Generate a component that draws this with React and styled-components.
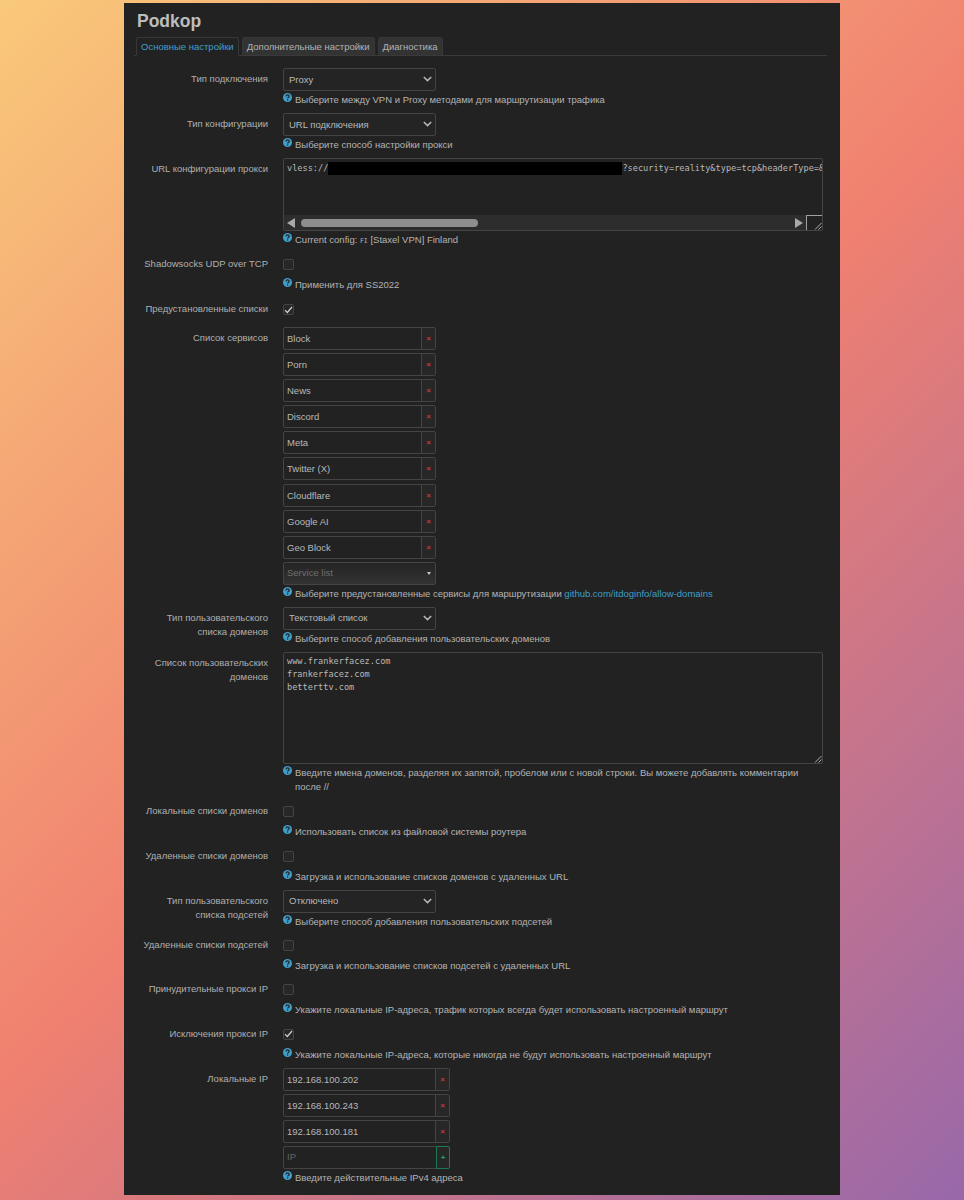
import React from 'react';
import styled, { createGlobalStyle } from 'styled-components';

const GlobalStyle = createGlobalStyle`
	html, body {
		margin: 0;
		padding: 0;
	}
	body {
		width: 964px;
		height: 1200px;
		overflow: hidden;
		background: linear-gradient(135deg, #f9c97a 0%, #f08070 50%, #9868aa 100%);
		font-family: "Liberation Sans", Arial, sans-serif;
		font-size: 9.5px;
		color: #b4b4b4;
	}
`;

const Page = styled.div`
	padding: 3px 0 0 124px;
`;

const Panel = styled.main`
	width: 716px;
	height: 1192px;
	box-sizing: border-box;
	padding: 8px 13px 0 13px;
	background: #222;
`;

const Title = styled.h1`
	margin: 0;
	font-size: 17.5px;
	line-height: 20px;
	font-weight: 700;
	color: #bdbdbd;
`;

const Tabs = styled.ul`
	display: flex;
	gap: 3px;
	margin: 6px 0 12px -3px;
	padding: 0 0 0 2px;
	list-style: none;
	border-bottom: 1px solid #3a3a3a;
	height: 18px;
`;

const Tab = styled.li`
	box-sizing: border-box;
	padding: 0 4px;
	line-height: 17px;
	border: 1px solid #383838;
	border-bottom: ${ ( p ) => ( p.$active ? '1px solid #222' : '0' ) };
	border-radius: 3px 3px 0 0;
	background: ${ ( p ) => ( p.$active ? '#222' : '#333' ) };
	color: ${ ( p ) => ( p.$active ? '#3f9fc9' : '#b4b4b4' ) };
	height: ${ ( p ) => ( p.$active ? '19px' : '18px' ) };
`;

const Row = styled.div`
	display: grid;
	grid-template-columns: 131px 1fr;
	column-gap: 15px;
	margin-bottom: ${ ( p ) => p.$gap ?? 6 }px;
`;

const Label = styled.div`
	text-align: right;
	line-height: 14px;
	padding-top: 4px;
	color: #b0b0b0;
`;

const Field = styled.div`
	min-width: 0;
`;

const Help = styled.div`
	display: flex;
	gap: 3px;
	padding: 2px 25px 0 0;
	line-height: 14px;
	color: #b4b4b4;
`;

const HelpBadge = styled.svg`
	flex: none;
	width: 9px;
	height: 9px;
`;

const HelpLink = styled.a`
	color: #3f9fc9;
	text-decoration: none;
`;

const TinyFlag = styled.span`
	font-size: 6.5px;
	font-family: "DejaVu Sans Mono", monospace;
`;

const Select = styled.div`
	display: flex;
	align-items: center;
	justify-content: space-between;
	width: 153px;
	height: 23px;
	box-sizing: border-box;
	padding: 0 3px 1px 5px;
	border: 1px solid #444;
	border-radius: 2px;
	background: #242424;
	color: #b8b8b8;
`;

const ComboBox = styled(Select)`
	padding: 0 4px 2px 3px;
	background: linear-gradient(#242424, #333);
	color: #6f6f6f;
`;

const ComboArrow = styled.span`
	width: 0;
	height: 0;
	margin-top: 2px;
	border: 2px solid transparent;
	border-top: 3px solid #c4c4c4;
	border-bottom: 0;
`;

const CheckSlot = styled.div`
	display: flex;
	align-items: center;
	height: 23px;
`;

const Check = styled.span`
	display: flex;
	align-items: center;
	justify-content: center;
	width: 11px;
	height: 11px;
	box-sizing: border-box;
	border: 1px solid #444;
	border-radius: 2px;
	background: #272727;
	color: #d0d0d0;
`;

const Mono = styled.div`
	font-family: "DejaVu Sans Mono", monospace;
	font-size: 8.6px;
	color: #b8b8b8;
`;

const ConfigBox = styled.div`
	width: 540px;
	height: 73px;
	box-sizing: border-box;
	display: flex;
	flex-direction: column;
	border: 1px solid #444;
	border-radius: 2px;
	overflow: hidden;
`;

const ConfigText = styled(Mono)`
	flex: 1;
	padding: 3px 0 0 3px;
	line-height: 13px;
	white-space: nowrap;
	overflow: hidden;
`;

const Redacted = styled.span`
	display: inline-block;
	width: 294px;
	height: 13px;
	vertical-align: top;
	background: #000;
`;

const ScrollBar = styled.div`
	display: flex;
	align-items: center;
	height: 15px;
	background: #2d2d2d;
`;

const ScrollArrow = styled.span`
	flex: none;
	width: 0;
	height: 0;
	margin: ${ ( p ) => ( p.$right ? '0 3px 0 0' : '0 6px 0 3px' ) };
	border-top: 5px solid transparent;
	border-bottom: 5px solid transparent;
	${ ( p ) => ( p.$right ? 'border-left: 8px solid #a8a8a8;' : 'border-right: 8px solid #a8a8a8;' ) }
`;

const ScrollThumb = styled.span`
	flex: none;
	width: 177px;
	height: 8px;
	border-radius: 4px;
	background: #8e8e8e;
`;

const ScrollFill = styled.span`
	flex: 1;
`;

const Resizer = styled.span`
	position: relative;
	flex: none;
	width: 16px;
	height: 15px;
	box-sizing: border-box;
	border-left: 1px solid #a0a0a0;
	border-top: 1px solid #a0a0a0;
	background: #222;
`;

const Grip = styled.svg`
	position: absolute;
	right: 0;
	bottom: 0;
	width: 8px;
	height: 8px;
`;

const DomainBox = styled(Mono)`
	position: relative;
	width: 540px;
	height: 112px;
	box-sizing: border-box;
	padding: 2px 3px;
	line-height: 13px;
	border: 1px solid #444;
	border-radius: 2px;
	white-space: pre;
`;

const DynList = styled.div`
	display: flex;
	flex-direction: column;
	gap: ${ ( p ) => p.$gap }px;
	width: ${ ( p ) => p.$width }px;
`;

const DynItem = styled.div`
	display: flex;
	height: 23px;
	box-sizing: border-box;
	border: 1px solid #444;
	border-radius: 2px;
`;

const DynText = styled.span`
	flex: 1;
	padding-left: 3px;
	line-height: ${ ( p ) => ( p.$placeholder ? '20px' : '22px' ) };
	color: ${ ( p ) => ( p.$placeholder ? '#666' : '#b8b8b8' ) };
`;

const DynButton = styled.span`
	display: flex;
	flex: none;
	align-items: center;
	justify-content: center;
	box-sizing: border-box;
	width: 14px;
	margin: ${ ( p ) => ( p.$add ? '-1px -1px -1px 0' : '0' ) };
	border: ${ ( p ) => ( p.$add ? '1px solid #1d7a52' : '0' ) };
	border-left: 1px solid ${ ( p ) => ( p.$add ? '#1d7a52' : '#444' ) };
	border-radius: ${ ( p ) => ( p.$add ? '0 2px 2px 0' : '0' ) };
	background: #272727;
	font-size: 8px;
	font-weight: 700;
	color: ${ ( p ) => ( p.$add ? '#21a366' : '#c23a3a' ) };
`;

const HelpIcon = () => (
	<HelpBadge viewBox="0 0 18 18" aria-hidden="true">
		<circle cx="9" cy="9" r="9" fill="#3f9fc9" />
		<path d="M6 7c0-4.200 6.400-4.200 6.400-.4 0 2.400-3.200 2.400-3.200 4.600" fill="none" stroke="#222" strokeWidth="2.400" />
		<circle cx="9.200" cy="14.200" r="1.500" fill="#222" />
	</HelpBadge>
);

const Chevron = () => (
	<svg width="9" height="6" viewBox="0 0 9 6" aria-hidden="true">
		<path d="M.8 1l3.700 3.600L8.200 1" fill="none" stroke="#b8b8b8" strokeWidth="1.500" />
	</svg>
);

const CheckMark = () => (
	<svg width="9" height="8" viewBox="0 0 9 8" aria-hidden="true">
		<path d="M1 4.200l2.300 2.300 4.700-5.500" fill="none" stroke="currentColor" strokeWidth="1.200" />
	</svg>
);

const GripLines = () => (
	<Grip viewBox="0 0 8 8" aria-hidden="true">
		<path d="M1 7.500L7.500 1M4.500 7.500L7.500 4.500" stroke="#b0b0b0" strokeWidth="1" />
	</Grip>
);

const HelpLine = ( { children } ) => (
	<Help>
		<HelpIcon />
		<span>{ children }</span>
	</Help>
);

const SelectRow = ( { label, value, help, gap } ) => (
	<Row $gap={ gap }>
		<Label>{ label }</Label>
		<Field>
			<Select>{ value }<Chevron /></Select>
			<HelpLine>{ help }</HelpLine>
		</Field>
	</Row>
);

const CheckRow = ( { label, checked, help, gap } ) => (
	<Row $gap={ gap }>
		<Label>{ label }</Label>
		<Field>
			<CheckSlot><Check>{ checked && <CheckMark /> }</Check></CheckSlot>
			{ help && <HelpLine>{ help }</HelpLine> }
		</Field>
	</Row>
);

const services = [ 'Block', 'Porn', 'News', 'Discord', 'Meta', 'Twitter (X)', 'Cloudflare', 'Google AI', 'Geo Block' ];
const localIps = [ '192.168.100.202', '192.168.100.243', '192.168.100.181' ];

export default function App() {
	return (
		<Page>
			<GlobalStyle />
			<Panel>
				<Title>Podkop</Title>
				<Tabs>
					<Tab $active>Основные настройки</Tab>
					<Tab>Дополнительные настройки</Tab>
					<Tab>Диагностика</Tab>
				</Tabs>

				<SelectRow label="Тип подключения" value="Proxy" help="Выберите между VPN и Proxy методами для маршрутизации трафика" />
				<SelectRow label="Тип конфигурации" value="URL подключения" help="Выберите способ настройки прокси" />

				<Row $gap={ 5 }>
					<Label>URL конфигурации прокси</Label>
					<Field>
						<ConfigBox>
							<ConfigText>vless://<Redacted />?security=reality&amp;type=tcp&amp;headerType=&amp;</ConfigText>
							<ScrollBar>
								<ScrollArrow />
								<ScrollThumb />
								<ScrollFill />
								<ScrollArrow $right />
								<Resizer><GripLines /></Resizer>
							</ScrollBar>
						</ConfigBox>
						<HelpLine>Current config: <TinyFlag>FI</TinyFlag> [Staxel VPN] Finland</HelpLine>
					</Field>
				</Row>

				<CheckRow label="Shadowsocks UDP over TCP" help="Применить для SS2022" />
				<CheckRow label="Предустановленные списки" checked />

				<Row>
					<Label>Список сервисов</Label>
					<Field>
						<DynList $width={ 153 } $gap={ 3.1 }>
							{ services.map( ( name ) => (
								<DynItem key={ name }>
									<DynText>{ name }</DynText>
									<DynButton>×</DynButton>
								</DynItem>
							) ) }
							<ComboBox>Service list<ComboArrow /></ComboBox>
						</DynList>
						<HelpLine>
							Выберите предустановленные сервисы для маршрутизации <HelpLink>github.com/itdoginfo/allow-domains</HelpLink>
						</HelpLine>
					</Field>
				</Row>

				<SelectRow label="Тип пользовательского списка доменов" value="Текстовый список" help="Выберите способ добавления пользовательских доменов" />

				<Row>
					<Label>Список пользовательских доменов</Label>
					<Field>
						<DomainBox>
							{ 'www.frankerfacez.com\nfrankerfacez.com\nbetterttv.com' }
							<GripLines />
						</DomainBox>
						<HelpLine>Введите имена доменов, разделяя их запятой, пробелом или с новой строки. Вы можете добавлять комментарии после //</HelpLine>
					</Field>
				</Row>

				<CheckRow label="Локальные списки доменов" help="Использовать список из файловой системы роутера" />
				<CheckRow label="Удаленные списки доменов" help="Загрузка и использование списков доменов с удаленных URL" />
				<SelectRow label="Тип пользовательского списка подсетей" value="Отключено" gap={ 5 } help="Выберите способ добавления пользовательских подсетей" />
				<CheckRow label="Удаленные списки подсетей" gap={ 5 } help="Загрузка и использование списков подсетей с удаленных URL" />
				<CheckRow label="Принудительные прокси IP" help="Укажите локальные IP-адреса, трафик которых всегда будет использовать настроенный маршрут" />
				<CheckRow label="Исключения прокси IP" checked help="Укажите локальные IP-адреса, которые никогда не будут использовать настроенный маршрут" />

				<Row>
					<Label>Локальные IP</Label>
					<Field>
						<DynList $width={ 167 } $gap={ 3 }>
							{ localIps.map( ( ip ) => (
								<DynItem key={ ip }>
									<DynText>{ ip }</DynText>
									<DynButton>×</DynButton>
								</DynItem>
							) ) }
							<DynItem>
								<DynText $placeholder>IP</DynText>
								<DynButton $add>+</DynButton>
							</DynItem>
						</DynList>
						<HelpLine>Введите действительные IPv4 адреса</HelpLine>
					</Field>
				</Row>
			</Panel>
		</Page>
	);
}
